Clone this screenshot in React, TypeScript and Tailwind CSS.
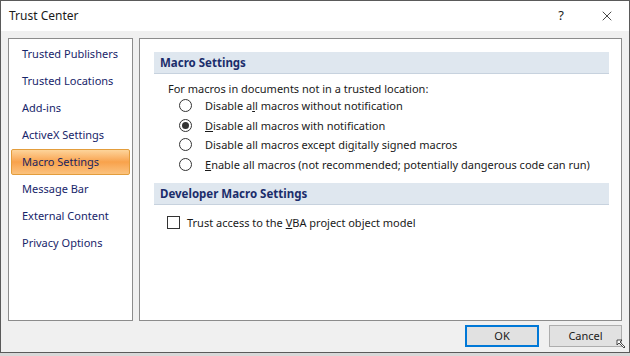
import { X } from 'lucide-react';

const NAV = [
  'Trusted Publishers',
  'Trusted Locations',
  'Add-ins',
  'ActiveX Settings',
  'Macro Settings',
  'Message Bar',
  'External Content',
  'Privacy Options',
];

function Radio({ checked }: { checked?: boolean }) {
  return (
    <span className="w-[13px] h-[13px] rounded-full border border-[#333] bg-white flex items-center justify-center shrink-0">
      {checked && <span className="w-[7px] h-[7px] rounded-full bg-[#333]" />}
    </span>
  );
}

function SectionHeader({ children }: { children: string }) {
  return (
    <div className="h-[22px] bg-[#dfe7ef] border-b border-[#c7d2de] flex items-center pl-[6px] font-bold text-[11.5px] text-[#1b2d6b]">
      {children}
    </div>
  );
}

export default function App() {
  return (
    <div
      className="w-[630px] h-[356px] bg-[#d8d8d8] text-[11px] text-[#1a1a1a]"
      style={{ fontFamily: '"Noto Sans", "Open Sans", sans-serif' }}
    >
      <div className="w-[630px] h-[353px] border border-[#5a5a5a] bg-[#f0f0f0] flex flex-col">
        {/* Title bar */}
        <div className="h-[30px] bg-white flex items-center pl-[8px] pr-[14px] shrink-0 text-[12px]">
          <span className="flex-1">Trust Center</span>
          <span className="mr-[35px] text-[13px]">?</span>
          <X className="w-[16px] h-[16px]" strokeWidth={1.2} />
        </div>

        {/* Body */}
        <div className="flex gap-[6px] pl-[7px] pr-[7px] pt-[7px]">
          <div className="w-[125px] h-[283px] bg-white border border-[#8c8c8c] pt-[2px] px-[2px]">
            {NAV.map((item) => (
              <div
                key={item}
                className={
                  item === 'Macro Settings'
                    ? 'h-[26px] mb-[1px] flex items-center pl-[10px] rounded-[2px] border border-[#e39d3c] bg-gradient-to-b from-[#fdd49a] via-[#f8a24b] to-[#fbc27d] text-[#1b2560]'
                    : 'h-[26px] mb-[1px] flex items-center pl-[11px] text-[#17256a]'
                }
              >
                {item}
              </div>
            ))}
          </div>

          <div className="w-[483px] h-[283px] bg-white border border-[#8c8c8c] pt-[13px] pl-[14px] pr-[12px]">
            <SectionHeader>Macro Settings</SectionHeader>
            <div className="pl-[14px] pt-[8px]">
              <div className="leading-[14px]">For macros in documents not in a trusted location:</div>
              <div className="pl-[11px] leading-[19.5px]">
                <div className="flex items-center gap-[13px]">
                  <Radio />
                  <span>
                    Disable a<u>l</u>l macros without notification
                  </span>
                </div>
                <div className="flex items-center gap-[13px]">
                  <Radio checked />
                  <span>
                    <u>D</u>isable all macros with notification
                  </span>
                </div>
                <div className="flex items-center gap-[13px]">
                  <Radio />
                  <span>
                    Disable all macros except di<u>g</u>itally signed macros
                  </span>
                </div>
                <div className="flex items-center gap-[13px]">
                  <Radio />
                  <span>
                    <u>E</u>nable all macros (not recommended; potentially dangerous code can run)
                  </span>
                </div>
              </div>
            </div>
            <div className="mt-[9px]">
              <SectionHeader>Developer Macro Settings</SectionHeader>
            </div>
            <div className="flex items-center gap-[7px] pl-[13px] pt-[8px] leading-[19.5px]">
              <span className="w-[13px] h-[13px] border border-[#333] bg-white shrink-0" />
              <span>
                Trust access to the <u>V</u>BA project object model
              </span>
            </div>
          </div>
        </div>

        {/* Buttons */}
        <div className="flex justify-end gap-[10px] pr-[7px] pt-[4px]">
          <button className="w-[74px] h-[22px] bg-[#e1e1e1] border-2 border-[#0078d7] flex items-center justify-center">
            OK
          </button>
          <div className="relative">
            <button className="w-[73px] h-[22px] bg-[#e1e1e1] border border-[#adadad] flex items-center justify-center">
              Cancel
            </button>
            <svg className="absolute left-[67px] top-[14px]" width="12" height="12" viewBox="0 0 12 12">
              <path d="M1 1 L1 6 L3 4 L8 9 L9 8 L4 3 L6 1 Z" fill="white" stroke="#222" strokeWidth="0.8" />
            </svg>
          </div>
        </div>
      </div>
    </div>
  );
}
